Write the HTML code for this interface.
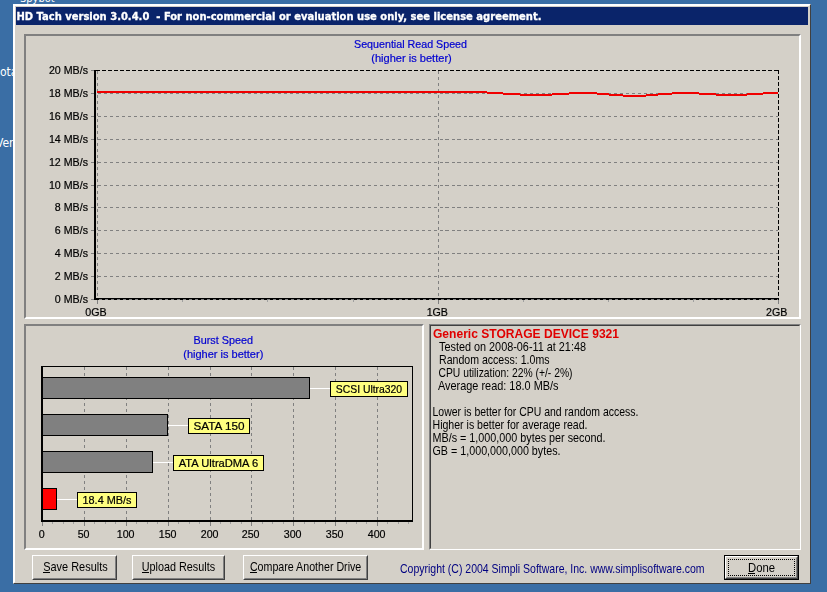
<!DOCTYPE html>
<html><head><meta charset="utf-8"><title>HD Tach</title>
<style>
html,body{margin:0;padding:0}
body{width:827px;height:592px;overflow:hidden;background:#3A6EA5;position:relative;font-family:"Liberation Sans",sans-serif}
.abs{position:absolute;box-sizing:border-box}
.desk{color:#fff;font:12px "DejaVu Sans Condensed","Liberation Sans",sans-serif;white-space:pre}
#win{left:13px;top:4px;width:798px;height:580px;background:#D4D0C8;border:1px solid;border-color:#FFFFFF #404040 #404040 #FFFFFF}
#win2{left:0;top:0;width:796px;height:578px;border:1px solid;border-color:#FFFFFF #D4D0C8 #D4D0C8 #FFFFFF}
#title{left:16px;top:7px;width:792px;height:18px;background:#0A246A}
.panel{border:2px solid;border-color:#808080 #FFFFFF #FFFFFF #808080}
.memo{border:1px solid;border-color:#808080 #FFFFFF #FFFFFF #808080}
.memo i{position:absolute;display:block;left:0;top:0;right:0;bottom:0;border:1px solid;border-color:#404040 #D4D0C8 #D4D0C8 #404040}
.btn{border:1px solid;border-color:#FFFFFF #404040 #404040 #FFFFFF;background:#D4D0C8}
.btn i{position:absolute;display:block;left:0;top:0;right:0;bottom:0;border:1px solid;border-color:#D4D0C8 #808080 #808080 #D4D0C8}
.def{border:1px solid #000;background:#D4D0C8}
.def b{position:absolute;display:block;left:0;top:0;right:0;bottom:0;border:1px solid;border-color:#FFFFFF #404040 #404040 #FFFFFF}
.def i{position:absolute;display:block;left:1px;top:1px;right:1px;bottom:1px;border:1px solid;border-color:#D4D0C8 #808080 #808080 #D4D0C8}
.def u{position:absolute;display:block;left:3px;top:3px;right:3px;bottom:3px;border:1px dotted #000}
svg{position:absolute;left:0;top:0;will-change:transform}
text{white-space:pre}
</style></head>
<body>
<div class="abs desk" style="left:20px;top:-8px;font-size:11px">Spybot</div>
<div class="abs desk" style="left:0;top:65px">otal</div>
<div class="abs desk" style="left:-4px;top:136px">Ver</div>
<div class="abs" id="win"><div class="abs" id="win2"></div></div>
<div class="abs" id="title"></div>
<div class="abs panel" style="left:24px;top:34px;width:777px;height:285px"></div>
<div class="abs panel" style="left:24px;top:324px;width:400px;height:226px"></div>
<div class="abs memo" style="left:429px;top:324px;width:372px;height:226px"><i></i></div>
<div class="abs btn" style="left:32px;top:555px;width:85px;height:25px"><i></i></div>
<div class="abs btn" style="left:132px;top:555px;width:93px;height:25px"><i></i></div>
<div class="abs btn" style="left:243px;top:555px;width:125px;height:25px"><i></i></div>
<div class="abs def" style="left:724px;top:555px;width:75px;height:25px"><b></b><i></i><u></u></div>
<svg width="827" height="592" viewBox="0 0 827 592" font-family="Liberation Sans, sans-serif">
<text x="16.5" y="20" font-size="11" fill="#fff" font-family="DejaVu Sans Condensed, Liberation Sans, sans-serif" font-weight="bold" stroke="#fff" stroke-width="0.3" textLength="525" lengthAdjust="spacingAndGlyphs">HD Tach version 3.0.4.0  - For non-commercial or evaluation use only, see license agreement.</text>
<g shape-rendering="crispEdges" fill="none">
<path d="M97.5,93.5H778M97.5,116.5H778M97.5,139.5H778M97.5,162.5H778M97.5,185.5H778M97.5,207.5H778M97.5,230.5H778M97.5,253.5H778M97.5,276.5H778M97.5,299.5H778" stroke="#808080" stroke-dasharray="3,3"/>
<path d="M97.5,71V298M438.5,71V298" stroke="#808080" stroke-dasharray="3,3"/>
<path d="M96,70.5H779" stroke="#000" stroke-dasharray="4,2"/>
<path d="M778.5,70V300" stroke="#000" stroke-dasharray="4,2"/>
<path d="M91,70.5H94M91,93.5H94M91,116.5H94M91,139.5H94M91,162.5H94M91,185.5H94M91,207.5H94M91,230.5H94M91,253.5H94M91,276.5H94M91,299.5H94" stroke="#808080"/>
<path d="M97.5,300V304M438.5,300V304M778.5,300V304" stroke="#808080"/>
<path d="M182.5,300V302M267.5,300V302M353.5,300V302M523.5,300V302M608.5,300V302M693.5,300V302" stroke="#A0A0A0"/>
<rect x="94" y="70" width="2" height="230" fill="#000"/>
<rect x="94" y="298" width="685" height="2" fill="#000"/>
<path d="M99,299.5H778" stroke="#808080" stroke-dasharray="3,3"/>
<polyline points="97,92 483,92 491,93 499,93 507,94 516,94 524,95 548,95 556,94 565,94 573,93 593,93 601,94 605,94 613,95 619,95 627,96 642,96 650,95 654,95 662,94 668,94 676,93 695,93 703,94 712,94 720,95 743,95 751,94 759,94 767,93 778,93" stroke="#F00000" stroke-width="2"/>
</g>
<text x="88" y="74" font-size="10.67" fill="#000" stroke="#000" stroke-width="0.2" text-anchor="end">20 MB/s</text>
<text x="88" y="97" font-size="10.67" fill="#000" stroke="#000" stroke-width="0.2" text-anchor="end">18 MB/s</text>
<text x="88" y="120" font-size="10.67" fill="#000" stroke="#000" stroke-width="0.2" text-anchor="end">16 MB/s</text>
<text x="88" y="143" font-size="10.67" fill="#000" stroke="#000" stroke-width="0.2" text-anchor="end">14 MB/s</text>
<text x="88" y="166" font-size="10.67" fill="#000" stroke="#000" stroke-width="0.2" text-anchor="end">12 MB/s</text>
<text x="88" y="189" font-size="10.67" fill="#000" stroke="#000" stroke-width="0.2" text-anchor="end">10 MB/s</text>
<text x="88" y="211" font-size="10.67" fill="#000" stroke="#000" stroke-width="0.2" text-anchor="end">8 MB/s</text>
<text x="88" y="234" font-size="10.67" fill="#000" stroke="#000" stroke-width="0.2" text-anchor="end">6 MB/s</text>
<text x="88" y="257" font-size="10.67" fill="#000" stroke="#000" stroke-width="0.2" text-anchor="end">4 MB/s</text>
<text x="88" y="280" font-size="10.67" fill="#000" stroke="#000" stroke-width="0.2" text-anchor="end">2 MB/s</text>
<text x="88" y="303" font-size="10.67" fill="#000" stroke="#000" stroke-width="0.2" text-anchor="end">0 MB/s</text>
<text x="96" y="316" font-size="10.67" fill="#000" stroke="#000" stroke-width="0.2" text-anchor="middle">0GB</text>
<text x="437.3" y="316" font-size="10.67" fill="#000" stroke="#000" stroke-width="0.2" text-anchor="middle">1GB</text>
<text x="787.3" y="316" font-size="10.67" fill="#000" stroke="#000" stroke-width="0.2" text-anchor="end">2GB</text>
<text x="410.5" y="48" font-size="10.67" fill="#0000D0" stroke="#0000D0" stroke-width="0.2" text-anchor="middle" textLength="113" lengthAdjust="spacingAndGlyphs">Sequential Read Speed</text>
<text x="411.5" y="61.5" font-size="10.67" fill="#0000D0" stroke="#0000D0" stroke-width="0.2" text-anchor="middle" textLength="80.5" lengthAdjust="spacingAndGlyphs">(higher is better)</text>
<text x="223.3" y="344" font-size="10.67" fill="#0000D0" stroke="#0000D0" stroke-width="0.2" text-anchor="middle" textLength="59.6" lengthAdjust="spacingAndGlyphs">Burst Speed</text>
<text x="223.3" y="358" font-size="10.67" fill="#0000D0" stroke="#0000D0" stroke-width="0.2" text-anchor="middle" textLength="80" lengthAdjust="spacingAndGlyphs">(higher is better)</text>
<g shape-rendering="crispEdges" fill="none">
<path d="M84.5,367V520M126.5,367V520M168.5,367V520M210.5,367V520M251.5,367V520M293.5,367V520M335.5,367V520M377.5,367V520" stroke="#808080" stroke-dasharray="3,3"/>
<rect x="41" y="366" width="2" height="156" fill="#000"/>
<rect x="41" y="520" width="372" height="2" fill="#000"/>
<path d="M41,366.5H413M412.5,366V522" stroke="#000"/>
<path d="M42.5,522V526M84.5,522V526M126.5,522V526M168.5,522V526M210.5,522V526M251.5,522V526M293.5,522V526M335.5,522V526M377.5,522V526" stroke="#808080"/>
<path d="M52.5,522V524M63.5,522V524M73.5,522V524M94.5,522V524M105.5,522V524M115.5,522V524M136.5,522V524M147.5,522V524M157.5,522V524M178.5,522V524M189.5,522V524M199.5,522V524M220.5,522V524M230.5,522V524M241.5,522V524M262.5,522V524M272.5,522V524M283.5,522V524M304.5,522V524M314.5,522V524M325.5,522V524M346.5,522V524M356.5,522V524M366.5,522V524M387.5,522V524M398.5,522V524M408.5,522V524" stroke="#A0A0A0"/>
<rect x="42.5" y="377.5" width="267" height="21" fill="#808080" stroke="#000"/>
<path d="M310,388.5H330" stroke="#fff"/>
<rect x="330.5" y="381.5" width="77" height="15" fill="#FFFF80" stroke="#000"/>
<rect x="42.5" y="414.5" width="125" height="21" fill="#808080" stroke="#000"/>
<path d="M168,425.5H188" stroke="#fff"/>
<rect x="188.5" y="418.5" width="61" height="15" fill="#FFFF80" stroke="#000"/>
<rect x="42.5" y="451.5" width="110" height="21" fill="#808080" stroke="#000"/>
<path d="M153,462.5H173" stroke="#fff"/>
<rect x="173.5" y="455.5" width="90" height="15" fill="#FFFF80" stroke="#000"/>
<rect x="42.5" y="488.5" width="14" height="21" fill="#FF0000" stroke="#000"/>
<path d="M57,499.5H77" stroke="#fff"/>
<rect x="77.5" y="492.5" width="59" height="15" fill="#FFFF80" stroke="#000"/>
</g>
<text x="369.0" y="392.5" font-size="10.67" fill="#000" stroke="#000" stroke-width="0.2" text-anchor="middle" textLength="66.3" lengthAdjust="spacingAndGlyphs">SCSI Ultra320</text>
<text x="219.0" y="429.5" font-size="10.67" fill="#000" stroke="#000" stroke-width="0.2" text-anchor="middle" textLength="51" lengthAdjust="spacingAndGlyphs">SATA 150</text>
<text x="218.5" y="466.5" font-size="10.67" fill="#000" stroke="#000" stroke-width="0.2" text-anchor="middle" textLength="79.5" lengthAdjust="spacingAndGlyphs">ATA UltraDMA 6</text>
<text x="107.0" y="503.5" font-size="10.67" fill="#000" stroke="#000" stroke-width="0.2" text-anchor="middle" textLength="49" lengthAdjust="spacingAndGlyphs">18.4 MB/s</text>
<text x="41.6" y="537.5" font-size="10.67" fill="#000" stroke="#000" stroke-width="0.2" text-anchor="middle">0</text>
<text x="83.6" y="537.5" font-size="10.67" fill="#000" stroke="#000" stroke-width="0.2" text-anchor="middle">50</text>
<text x="125.6" y="537.5" font-size="10.67" fill="#000" stroke="#000" stroke-width="0.2" text-anchor="middle">100</text>
<text x="167.6" y="537.5" font-size="10.67" fill="#000" stroke="#000" stroke-width="0.2" text-anchor="middle">150</text>
<text x="209.6" y="537.5" font-size="10.67" fill="#000" stroke="#000" stroke-width="0.2" text-anchor="middle">200</text>
<text x="250.6" y="537.5" font-size="10.67" fill="#000" stroke="#000" stroke-width="0.2" text-anchor="middle">250</text>
<text x="292.6" y="537.5" font-size="10.67" fill="#000" stroke="#000" stroke-width="0.2" text-anchor="middle">300</text>
<text x="334.6" y="537.5" font-size="10.67" fill="#000" stroke="#000" stroke-width="0.2" text-anchor="middle">350</text>
<text x="376.6" y="537.5" font-size="10.67" fill="#000" stroke="#000" stroke-width="0.2" text-anchor="middle">400</text>
<text x="433" y="337.7" font-size="12" fill="#E00000" font-weight="bold" textLength="186" lengthAdjust="spacingAndGlyphs">Generic STORAGE DEVICE 9321</text>
<text x="439" y="350.5" font-size="13" fill="#000" textLength="147" lengthAdjust="spacingAndGlyphs">Tested on 2008-06-11 at 21:48</text>
<text x="439" y="363.5" font-size="13" fill="#000" textLength="110.5" lengthAdjust="spacingAndGlyphs">Random access: 1.0ms</text>
<text x="438.5" y="376.5" font-size="13" fill="#000" textLength="134" lengthAdjust="spacingAndGlyphs">CPU utilization: 22% (+/- 2%)</text>
<text x="438" y="389.5" font-size="13" fill="#000" textLength="120.5" lengthAdjust="spacingAndGlyphs">Average read: 18.0 MB/s</text>
<text x="432.5" y="415.5" font-size="13" fill="#000" textLength="206" lengthAdjust="spacingAndGlyphs">Lower is better for CPU and random access.</text>
<text x="432.5" y="428.5" font-size="13" fill="#000" textLength="155" lengthAdjust="spacingAndGlyphs">Higher is better for average read.</text>
<text x="432.5" y="441.5" font-size="13" fill="#000" textLength="173" lengthAdjust="spacingAndGlyphs">MB/s = 1,000,000 bytes per second.</text>
<text x="432.5" y="454.5" font-size="13" fill="#000" textLength="128" lengthAdjust="spacingAndGlyphs">GB = 1,000,000,000 bytes.</text>
<text x="43.2" y="570.5" font-size="13" fill="#000" textLength="64.5" lengthAdjust="spacingAndGlyphs">Save Results</text>
<text x="141.8" y="570.5" font-size="13" fill="#000" textLength="73.3" lengthAdjust="spacingAndGlyphs">Upload Results</text>
<text x="249.9" y="570.5" font-size="13" fill="#000" textLength="111.4" lengthAdjust="spacingAndGlyphs">Compare Another Drive</text>
<text x="748" y="571.5" font-size="13" fill="#000" textLength="27" lengthAdjust="spacingAndGlyphs">Done</text>
<path shape-rendering="crispEdges" d="M43,572.5H50M142,572.5H149M250,572.5H257M748,573.5H755" stroke="#000" fill="none"/>
<text x="400" y="572.5" font-size="13" fill="#000080" textLength="304.5" lengthAdjust="spacingAndGlyphs">Copyright (C) 2004 Simpli Software, Inc. www.simplisoftware.com</text>
</svg>

</body></html>
